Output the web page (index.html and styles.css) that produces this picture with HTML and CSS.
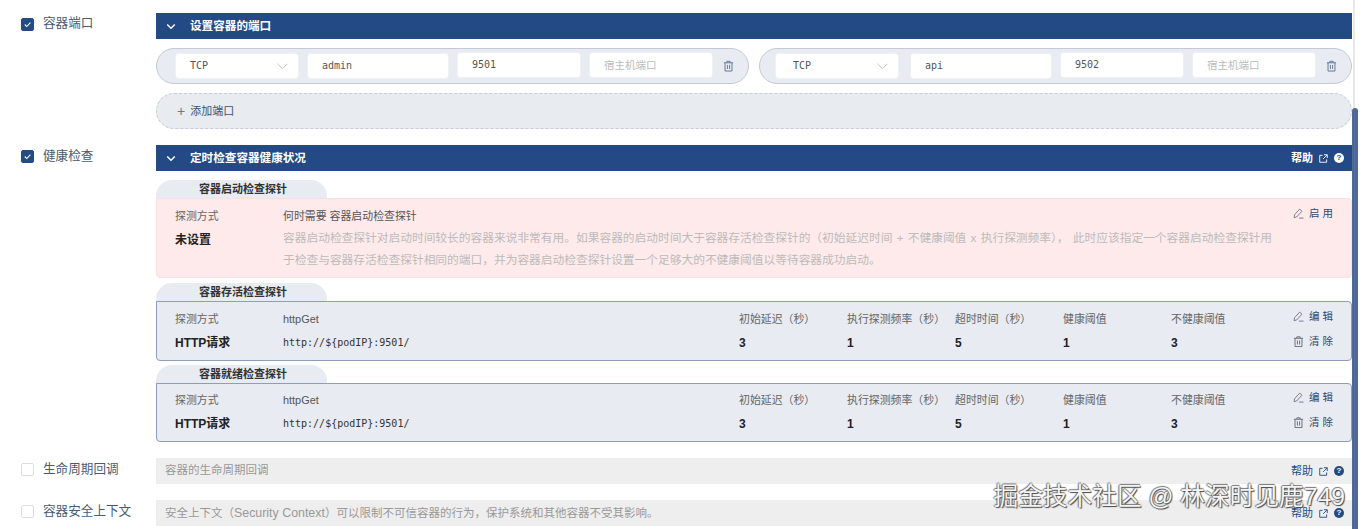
FILE: index.html
```html
<!DOCTYPE html>
<html lang="zh">
<head>
<meta charset="utf-8">
<title>容器配置</title>
<link rel="stylesheet" href="styles.css">
</head>
<body>
<svg class="defs" width="0" height="0" aria-hidden="true">
  <symbol id="trash" viewBox="0 0 12 12"><path d="M1 2.500h10M4.200 2.500V.9h3.600v1.600M2.200 2.500v9h7.600v-9M4.800 4.800v4.500M7.200 4.800v4.500" fill="none" stroke="currentColor"/></symbol>
  <symbol id="pen" viewBox="0 0 12 12"><path d="M1.200 10.500l.5-3.200L7.300 1.200l2.500 2.300L4 9.800zM6.500 11H11.500" fill="none" stroke="currentColor" stroke-width=".9"/></symbol>
  <symbol id="ext" viewBox="0 0 10 10"><path d="M8.500 6v3.200H.8V1.500h3.200M5.500 .8h3.700v3.700M9 1L4.500 5.500" fill="none" stroke="currentColor"/></symbol>
</svg>
<main class="page">
  <section class="row row-ports">
    <label class="side"><span class="check on"><svg viewBox="0 0 12 12"><path d="M3 6l2.200 2.200L9.200 4" fill="none" stroke="#fff" stroke-width="1.200"/></svg></span><span>容器端口</span></label>
    <div class="body">
      <div class="bar"><svg class="chev" viewBox="0 0 12 8"><path d="M1.500 1.500L6 6l4.500-4.500" fill="none" stroke="#fff" stroke-width="1.800"/></svg><b>设置容器的端口</b></div>
      <div class="ports">
        <div class="port">
          <div class="field sel">TCP<svg viewBox="0 0 12 7"><path d="M.5.500L6 6 11.500.500" fill="none" stroke="#bbb"/></svg></div>
          <div class="field name">admin</div>
          <div class="field num">9501</div>
          <div class="field num ph">宿主机端口</div>
          <svg class="del"><use href="#trash"/></svg>
        </div>
        <div class="port">
          <div class="field sel">TCP<svg viewBox="0 0 12 7"><path d="M.5.500L6 6 11.500.500" fill="none" stroke="#bbb"/></svg></div>
          <div class="field name">api</div>
          <div class="field num">9502</div>
          <div class="field num ph">宿主机端口</div>
          <svg class="del"><use href="#trash"/></svg>
        </div>
      </div>
      <div class="add"><span class="plus">+</span>添加端口</div>
    </div>
  </section>

  <section class="row row-health">
    <label class="side"><span class="check on"><svg viewBox="0 0 12 12"><path d="M3 6l2.200 2.200L9.200 4" fill="none" stroke="#fff" stroke-width="1.200"/></svg></span><span>健康检查</span></label>
    <div class="body">
      <div class="bar"><svg class="chev" viewBox="0 0 12 8"><path d="M1.500 1.500L6 6l4.500-4.500" fill="none" stroke="#fff" stroke-width="1.800"/></svg><b>定时检查容器健康状况</b>
        <span class="help">帮助<svg class="ext"><use href="#ext"/></svg><i class="q">?</i></span></div>

      <div class="tab">容器启动检查探针</div>
      <div class="probe warn">
        <div class="col-a"><span class="k">探测方式</span><strong>未设置</strong></div>
        <div class="col-wide">
          <span class="k dark">何时需要 容器启动检查探针</span>
          <p>容器启动检查探针对启动时间较长的容器来说非常有用。如果容器的启动时间大于容器存活检查探针的（初始延迟时间 + 不健康阈值 x 执行探测频率）， 此时应该指定一个容器启动检查探针用于检查与容器存活检查探针相同的端口，并为容器启动检查探针设置一个足够大的不健康阈值以等待容器成功启动。</p>
        </div>
        <div class="acts"><span class="act"><svg><use href="#pen"/></svg>启 用</span></div>
      </div>

      <div class="tab">容器存活检查探针</div>
      <div class="probe">
        <div class="col-a"><span class="k">探测方式</span><strong>HTTP请求</strong></div>
        <div class="col-b"><span class="k dark">httpGet</span><code>http://${podIP}:9501/</code></div>
        <div class="stat"><span class="k">初始延迟（秒）</span><b>3</b></div>
        <div class="stat"><span class="k">执行探测频率（秒）</span><b>1</b></div>
        <div class="stat"><span class="k">超时时间（秒）</span><b>5</b></div>
        <div class="stat"><span class="k">健康阈值</span><b>1</b></div>
        <div class="stat"><span class="k">不健康阈值</span><b>3</b></div>
        <div class="acts"><span class="act"><svg><use href="#pen"/></svg>编 辑</span><span class="act"><svg><use href="#trash"/></svg>清 除</span></div>
      </div>

      <div class="tab">容器就绪检查探针</div>
      <div class="probe ready">
        <div class="col-a"><span class="k">探测方式</span><strong>HTTP请求</strong></div>
        <div class="col-b"><span class="k dark">httpGet</span><code>http://${podIP}:9501/</code></div>
        <div class="stat"><span class="k">初始延迟（秒）</span><b>3</b></div>
        <div class="stat"><span class="k">执行探测频率（秒）</span><b>1</b></div>
        <div class="stat"><span class="k">超时时间（秒）</span><b>5</b></div>
        <div class="stat"><span class="k">健康阈值</span><b>1</b></div>
        <div class="stat"><span class="k">不健康阈值</span><b>3</b></div>
        <div class="acts"><span class="act"><svg><use href="#pen"/></svg>编 辑</span><span class="act"><svg><use href="#trash"/></svg>清 除</span></div>
      </div>
    </div>
  </section>

  <section class="row row-life">
    <label class="side"><span class="check"></span><span>生命周期回调</span></label>
    <div class="body"><div class="bar off">容器的生命周期回调<span class="help">帮助<svg class="ext"><use href="#ext"/></svg><i class="q">?</i></span></div></div>
  </section>
  <section class="row row-sec">
    <label class="side"><span class="check"></span><span>容器安全上下文</span></label>
    <div class="body"><div class="bar off"><span>安全上下文（<span class="latin">Security Context</span>）可以限制不可信容器的行为，保护系统和其他容器不受其影响。</span><span class="help">帮助<svg class="ext"><use href="#ext"/></svg><i class="q">?</i></span></div></div>
  </section>
</main>
<div class="scroll"><div class="thumb"></div></div>
<div class="mark">掘金技术社区 @ 林深时见鹿749</div>
</body>
</html>
```
FILE: styles.css
```css
* { box-sizing: border-box; }
html, body { height: 100%; }
body { margin: 0; background: #fff; color: #333; font: 12px/1.5 "Liberation Sans", "Noto Sans CJK SC", sans-serif; overflow: hidden; position: relative; }
.defs { position: absolute; }
.page { padding: 13px 12px 0 21px; }
.row { display: flex; }
.row-ports { height: 132px; }
.row-health { height: 313px; }
.row-life { height: 42px; }
.side { width: 135px; flex: none; display: flex; gap: 9px; align-items: center; height: 22px; font-size: 12.6px; color: #4a5a70; }
.row-ports .side span:last-child { position: relative; top: -1px; }
.check { width: 13px; height: 13px; border-radius: 2px; border: 1px solid #ddd; background: #fff; display: block; }
.check.on { background: #234b85; border-color: #234b85; }
.check svg { display: block; width: 11px; height: 11px; }
.body { flex: 1; min-width: 0; }
.bar { height: 26px; background: #234a84; color: #fff; display: flex; align-items: center; padding-left: 10px; font-size: 11.6px; }
.bar b { font-weight: 700; }
.chev { width: 10px; height: 7px; margin-right: 14px; }
.bar.off { background: #eee; color: #999; padding-left: 9px; font-size: 11.5px; }
.latin { font-size: 12.4px; }
.help { margin-left: auto; display: flex; align-items: center; gap: 6px; font-size: 11px; font-weight: 700; padding-right: 8px; }
.off .help { color: #234a84; font-weight: 400; }
.ext { width: 9px; height: 9px; }
.q { width: 10px; height: 10px; border-radius: 50%; background: #fff; color: #234a84; font: 700 8px/10px "Liberation Sans", sans-serif; text-align: center; }
.off .q { background: #234a84; color: #fff; }
.ports { display: flex; gap: 10px; margin-top: 9px; }
.port { flex: 1; height: 36px; border: 1px solid #c4c9d8; border-radius: 18px; background: #e8ebf1; display: flex; align-items: center; padding-left: 19px; gap: 10px; }
.port + .port .sel { margin-left: -3px; padding-left: 17px; }
.port + .port .name { margin-left: 3px; }
.field { height: 24px; background: #fff; border-radius: 3px; font: 10px/24px "DejaVu Sans Mono", monospace; color: #555; padding-left: 14px; position: relative; box-shadow: 0 0 0 1px #eef0f4; }
.sel { width: 122px; }
.sel svg { position: absolute; right: 10px; top: 9px; width: 11px; height: 7px; }
.name { width: 140px; }
.num { width: 122px; margin-top: -2px; }
.ph { color: #bbb; font-family: "Noto Sans CJK SC", sans-serif; font-size: 10.5px; }
.del { width: 11px; height: 12px; color: #5a7394; margin-left: 1px; flex: none; }
.add { height: 36px; margin-top: 9px; border: 1px dashed #c8ccd4; border-radius: 18px; background: #e8ebf0; color: #3b5274; display: flex; align-items: center; padding-left: 20px; font-size: 11px; }
.plus { font-size: 14px; font-weight: 300; color: #777; margin-right: 5px; }
.tab { width: 171px; height: 18px; margin-top: 4px; border-radius: 16px 16px 0 0; background: #e8ebf1; color: #333; font-size: 11px; font-weight: 700; line-height: 18px; padding-left: 43px; }
.row-health .bar + .tab { margin-top: 9px; }
.warn + .tab { margin-top: 5px; }
.probe { display: flex; border: 1px solid #8e9dbd; border-radius: 0 4px 4px 4px; background: #e8ebf1; padding: 9px 18px 0; height: 60px; }
.probe.warn { height: 80px; background: #feeaea; border-color: #fbdede; }
.probe.ready { height: 59px; padding-top: 8px; }
.col-a { width: 108px; flex: none; }
.col-b { width: 456px; flex: none; }
.k { display: block; font-size: 10.9px; line-height: 16px; color: #666; white-space: nowrap; }
.k.dark { color: #555; }
.col-a strong { display: block; font-size: 12px; color: #222; margin-top: 7px; line-height: 18px; }
code { display: block; font: 10px/18px "DejaVu Sans Mono", monospace; color: #333; margin-top: 7px; }
.stat { width: 108px; flex: none; }
.stat b { display: block; font-size: 12px; color: #222; margin-top: 7px; line-height: 18px; }
.col-wide { width: 994px; flex: none; }
.col-wide p { margin: 3px 0 0; font-size: 11.72px; word-spacing: 1px; line-height: 22px; color: #bbb; }
.acts { margin-left: auto; display: flex; flex-direction: column; gap: 9px; width: 40px; flex: none; margin-top: -3px; }
.act { display: flex; align-items: center; gap: 5px; font-size: 10.5px; line-height: 16px; color: #2f4870; white-space: nowrap; }
.act svg { width: 11px; height: 11px; color: #667; }
.scroll { position: absolute; right: 9px; top: 0; bottom: 0; width: 2px; background: #e8e8e8; }
.thumb { position: absolute; left: -1px; right: -3px; top: 108px; bottom: 0; background: #4f6a96; border-radius: 3px 3px 0 0; }
.mark { position: absolute; right: 19px; bottom: 17px; font-size: 24.7px; line-height: 30px; color: #f4f4f4; text-shadow: 1px 1px 1px #444, -1px 0 1px #777, 0 -1px 1px #777; white-space: nowrap; }
```
